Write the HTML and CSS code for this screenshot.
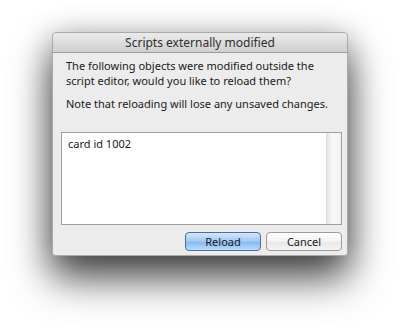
FILE: index.html
```html
<!DOCTYPE html>
<html lang="en">
<head>
  <title>Scripts externally modified</title>
  <link rel="stylesheet" href="styles.css">
</head>
<body>
  <div class="dialog">
    <div class="titlebar">Scripts externally modified</div>
    <div class="content">
      <p class="message">The following objects were modified outside the script editor, would you like to reload them?</p>
      <p class="message">Note that reloading will lose any unsaved changes.</p>
      <div class="list">
        <div class="list-items">
          <div class="list-item">card id 1002</div>
        </div>
        <div class="scrollbar"></div>
      </div>
      <div class="buttons">
        <button class="btn default">Reload</button>
        <button class="btn">Cancel</button>
      </div>
    </div>
  </div>
</body>
</html>
```

FILE: styles.css
```css
* {
  margin: 0;
  padding: 0;
  box-sizing: border-box;
}
body {
  width: 400px;
  height: 328px;
  background-color: #ffffff;
  font-family: 'Noto Sans', sans-serif;
  font-size: 11px;
  color: #1a1a1a;
  padding: 32px 52px 0 52px;
  overflow: hidden;
}
.dialog {
  width: 296px;
  height: 224px;
  background-color: #ececec;
  border: 1px solid #a9a9a9;
  border-radius: 4px 4px 3px 3px;
  box-shadow: 0 22px 40px rgba(0, 0, 0, 0.7), 0 4px 30px rgba(0, 0, 0, 0.25);
  display: flex;
  flex-direction: column;
}
.titlebar {
  height: 20px;
  line-height: 19px;
  text-align: center;
  font-size: 12px;
  color: #2e2e2e;
  background: linear-gradient(#ebebeb, #d0d0d0);
  border-bottom: 1px solid #9a9a9a;
  border-radius: 4px 4px 0 0;
}
.content {
  flex: 1;
  padding: 5px 5px 5px 8px;
  display: flex;
  flex-direction: column;
}
.message {
  line-height: 15px;
  margin-bottom: 8px;
  padding-left: 5px;
}
.list {
  height: 93px;
  margin-top: 13px;
  background-color: #ffffff;
  border: 1px solid #9f9f9f;
  display: flex;
}
.list-items {
  flex: 1;
  padding: 3px 6px;
}
.list-item {
  line-height: 15px;
}
.scrollbar {
  width: 15px;
  background: linear-gradient(to right, #e4e4e4, #fafafa 40%, #f0f0f0);
  border-left: 1px solid #dddddd;
}
.buttons {
  display: flex;
  justify-content: flex-end;
  gap: 5px;
  margin-top: 7px;
}
.btn {
  width: 76px;
  height: 19px;
  font-family: 'Noto Sans', sans-serif;
  font-size: 11px;
  color: #1a1a1a;
  border: 1px solid #9c9c9c;
  border-radius: 4px;
  background: linear-gradient(#ffffff, #f2f2f2 50%, #e6e6e6 51%, #f4f4f4);
}
.btn.default {
  border-color: #4f6d9c;
  background: linear-gradient(#d4e6fb, #9fc7f4 50%, #80b5f0 51%, #bcdcfb);
}
```
